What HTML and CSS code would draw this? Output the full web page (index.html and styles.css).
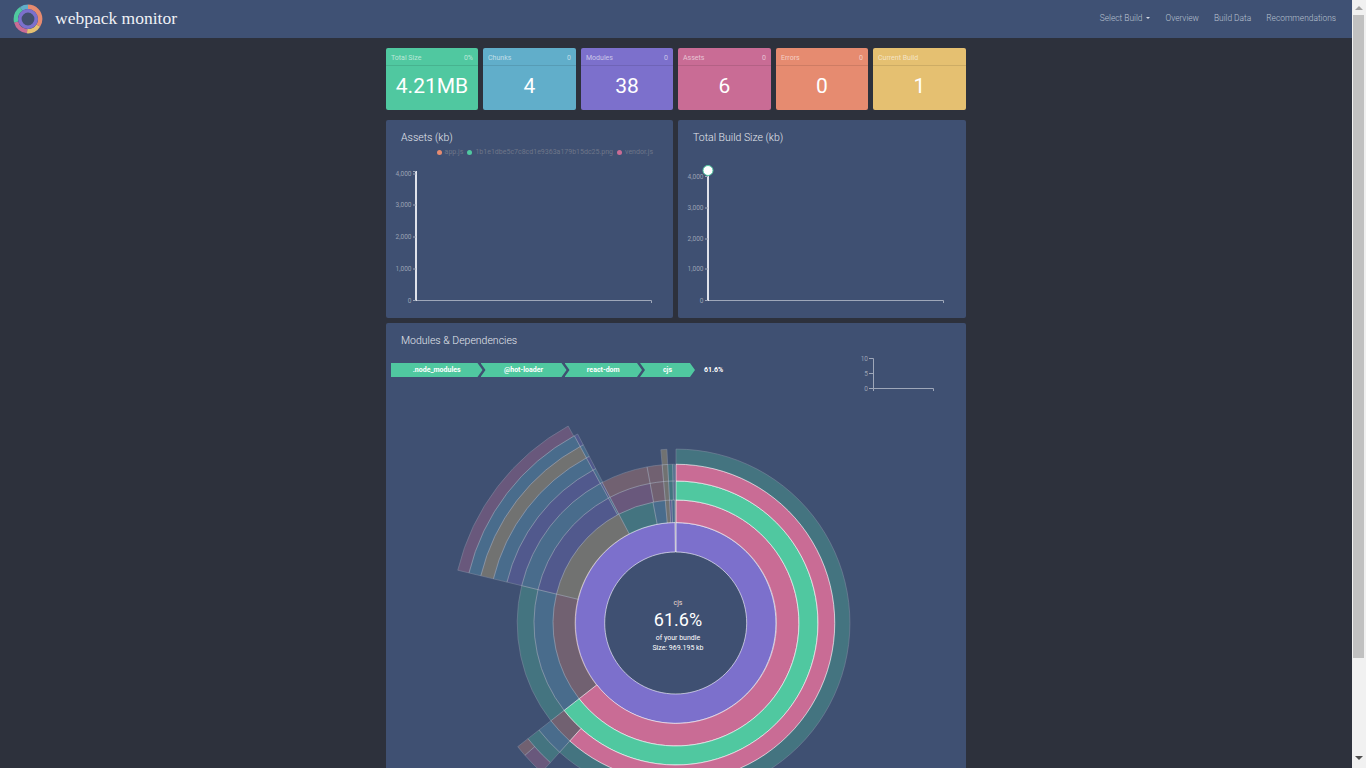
FILE: index.html
```html
<html>
<head>
    <meta charset="utf-8">
    <title>webpack monitor</title>
    <link rel="stylesheet" href="styles.css">
</head>
<body>
    <nav class="navbar">
        <a class="brand">
            <svg class="logo" width="30" height="30" viewBox="0 0 30 30" xmlns="http://www.w3.org/2000/svg">
                <circle class="logo-hole" cx="15" cy="15" r="14"/>
                <g fill="none" stroke-width="4.4" transform="rotate(-90 15 15)">
                    <circle cx="15" cy="15" r="12.2" stroke="#e68b70" stroke-dasharray="26 76.7"/>
                    <circle cx="15" cy="15" r="12.2" stroke="#e5c071" stroke-dasharray="13 76.7" stroke-dashoffset="-26"/>
                    <circle cx="15" cy="15" r="12.2" stroke="#c96c95" stroke-dasharray="15 76.7" stroke-dashoffset="-39"/>
                    <circle cx="15" cy="15" r="12.2" stroke="#50c8a0" stroke-dasharray="15 76.7" stroke-dashoffset="-54"/>
                    <circle cx="15" cy="15" r="12.2" stroke="#61aeca" stroke-dasharray="7.7 76.7" stroke-dashoffset="-69"/>
                </g>
                <circle cx="15" cy="15" r="8.2" fill="none" stroke="#7c70cc" stroke-width="3.6"/>
            </svg>
            <span class="brand-name">webpack monitor</span>
        </a>
        <ul class="nav-links">
            <li>Select Build <i class="caret"></i></li>
            <li>Overview</li>
            <li>Build Data</li>
            <li>Recommendations</li>
        </ul>
    </nav>

    <main class="container">
        <section class="stats">
            <div class="stat stat-green">
                <div class="stat-head"><span>Total Size</span><span>0%</span></div>
                <div class="stat-value">4.21MB</div>
            </div>
            <div class="stat stat-blue">
                <div class="stat-head"><span>Chunks</span><span>0</span></div>
                <div class="stat-value">4</div>
            </div>
            <div class="stat stat-purple">
                <div class="stat-head"><span>Modules</span><span>0</span></div>
                <div class="stat-value">38</div>
            </div>
            <div class="stat stat-pink">
                <div class="stat-head"><span>Assets</span><span>0</span></div>
                <div class="stat-value">6</div>
            </div>
            <div class="stat stat-orange">
                <div class="stat-head"><span>Errors</span><span>0</span></div>
                <div class="stat-value">0</div>
            </div>
            <div class="stat stat-yellow">
                <div class="stat-head"><span>Current Build</span></div>
                <div class="stat-value">1</div>
            </div>
        </section>

        <section class="charts">
            <div class="panel">
                <h3 class="panel-title">Assets (kb)</h3>
                <div class="legend">
                    <span class="legend-item"><i class="dot dot-orange"></i>app.js</span>
                    <span class="legend-item"><i class="dot dot-green"></i>1b1e1dbe5c7c8cd1e9363a179b15dc25.png</span>
                    <span class="legend-item"><i class="dot dot-pink"></i>vendor.js</span>
                </div>
                <svg class="chart" width="287" height="162" viewBox="0 0 287 162" xmlns="http://www.w3.org/2000/svg">
                    <path class="axis-x" d="M30 144.5H265.5V147"/>
                    <path class="axis-y" d="M30 15V145"/>
                    <path class="ticks" d="M27 15.5H30M27 18H30M27 49H30M27 81H30M27 113H30M27 144.5H30"/>
                    <g class="tick-labels">
                        <text x="25.5" y="20">4,000</text>
                        <text x="25.5" y="51">3,000</text>
                        <text x="25.5" y="83">2,000</text>
                        <text x="25.5" y="115">1,000</text>
                        <text x="25.5" y="146.5">0</text>
                    </g>
                </svg>
            </div>
            <div class="panel">
                <h3 class="panel-title">Total Build Size (kb)</h3>
                <div class="legend"></div>
                <svg class="chart" width="288" height="162" viewBox="0 0 288 162" xmlns="http://www.w3.org/2000/svg">
                    <path class="axis-x" d="M30 144.5H265.5V147"/>
                    <path class="axis-y" d="M30 15V145"/>
                    <path class="ticks" d="M27 20.5H30M27 52H30M27 83H30M27 113H30M27 144.5H30"/>
                    <g class="tick-labels">
                        <text x="25.5" y="22.5">4,000</text>
                        <text x="25.5" y="54">3,000</text>
                        <text x="25.5" y="85">2,000</text>
                        <text x="25.5" y="115">1,000</text>
                        <text x="25.5" y="146.5">0</text>
                    </g>
                    <circle class="point" cx="30" cy="14.5" r="5"/>
                </svg>
            </div>
        </section>

        <section class="panel panel-wide">
            <h3 class="panel-title">Modules &amp; Dependencies</h3>
            <div class="trail-row">
                <div class="trail">
                    <span class="crumb crumb-first">.node_modules</span>
                    <span class="crumb crumb-hot">@hot-loader</span>
                    <span class="crumb crumb-react">react-dom</span>
                    <span class="crumb crumb-cjs">cjs</span>
                    <span class="trail-percent">61.6%</span>
                </div>
                <svg class="mini-chart" width="80" height="37" viewBox="0 0 80 37" xmlns="http://www.w3.org/2000/svg">
                    <path class="axis-thin" d="M11 3.5H15.5V33.5H75.5V36M11 18.5H15.5M11 33.5H15.5V36"/>
                    <g class="tick-labels">
                        <text x="10" y="5.5">10</text>
                        <text x="10" y="20.5">5</text>
                        <text x="10" y="35.5">0</text>
                    </g>
                </svg>
            </div>
            <svg id="sunburst" class="sunburst" width="580" height="470" viewBox="-290 -231 580 470" xmlns="http://www.w3.org/2000/svg">
                <g id="arcs"></g>
                <text class="center-name" x="2" y="-18.5">cjs</text>
                <text class="center-percent" x="2" y="2.5">61.6%</text>
                <text class="center-note" x="2" y="16.5">of your bundle</text>
                <text class="center-note" x="2" y="26.5">Size: 969.195 kb</text>
            </svg>
        </section>
    </main>

    <div class="scrollbar">
        <i class="scroll-up"></i>
        <div class="scroll-thumb"></div>
        <i class="scroll-down"></i>
    </div>
    <script src="sunburst.js"></script>
</body>
</html>
```
FILE: styles.css
```css
html, body {
    height: 100%;
    margin: 0;
    overflow: hidden;
    background: #2d313c;
    font-family: Roboto, "Liberation Sans", sans-serif;
}
body {
    padding-right: 14px;
}
.scrollbar {
    position: fixed;
    top: 0;
    right: 0;
    bottom: 0;
    display: flex;
    flex-direction: column;
    align-items: center;
    width: 14px;
    background: #f1f1f1;
}
.scroll-up,
.scroll-down {
    flex: none;
    width: 0;
    height: 0;
    border-left: 4px solid transparent;
    border-right: 4px solid transparent;
}
.scroll-up {
    margin-top: 6px;
    border-bottom: 4px solid #a3a3a3;
}
.scroll-down {
    margin-top: 98px;
    border-top: 4px solid #505050;
}
.scroll-thumb {
    flex: none;
    width: 11px;
    height: 643px;
    margin: 5px 1px 0 0;
    background: #c1c1c1;
}
.navbar {
    display: flex;
    justify-content: space-between;
    align-items: center;
    height: 38px;
    background: #3f5174;
}
.brand {
    display: flex;
    align-items: center;
    gap: 12px;
    padding-left: 13px;
    color: #f0f2f6;
    font-family: "Liberation Serif", serif;
    font-size: 17.5px;
}
.brand-name {
    margin-top: -2px;
}
.logo {
    display: block;
}
.logo-hole {
    fill: #42506e;
}
.nav-links {
    display: flex;
    gap: 15px;
    margin: 0;
    padding: 0 16px 3px 0;
    list-style: none;
    color: #b9c1d0;
    font-size: 8.4px;
    font-weight: 300;
}
.caret {
    display: inline-block;
    margin-left: 2px;
    vertical-align: middle;
    border-top: 2px solid #d5d9e2;
    border-left: 2px solid transparent;
    border-right: 2px solid transparent;
}
.container {
    display: flex;
    flex-direction: column;
    width: 580px;
    margin: 0 auto;
    padding: 10px 0;
}
.stats {
    display: grid;
    grid-template-columns: 92px 93px 92px 93px 92px 93px;
    gap: 5px;
}
.stat {
    height: 62px;
    border-radius: 2px;
    color: #fff;
}
.stat-green { background: #50c8a0; }
.stat-blue { background: #61aeca; }
.stat-purple { background: #7c70cc; }
.stat-pink { background: #c96c95; }
.stat-orange { background: #e68b70; }
.stat-yellow { background: #e5c071; }
.stat-head {
    display: flex;
    justify-content: space-between;
    align-items: center;
    height: 15px;
    padding: 2px 5px 0;
    border-bottom: 1px solid rgba(0, 0, 0, 0.1);
    color: rgba(255, 255, 255, 0.6);
    font-size: 7px;
}
.stat-value {
    padding-top: 8px;
    text-align: center;
    font-size: 21px;
    line-height: 25px;
}
.charts {
    display: grid;
    grid-template-columns: 287px 288px;
    gap: 5px;
    margin-top: 10px;
}
.panel {
    height: 198px;
    border-radius: 2px;
    background: #3f5072;
}
.panel-title {
    height: 27px;
    margin: 0;
    padding: 11px 15px 0;
    box-sizing: border-box;
    color: #e4e7ee;
    font-size: 10.5px;
    font-weight: 300;
    line-height: 13px;
}
.legend {
    display: flex;
    justify-content: flex-end;
    gap: 4px;
    height: 8px;
    padding: 1px 20px 0 0;
    color: #6e7689;
    font-size: 7px;
    line-height: 9px;
}
.legend-item {
    display: flex;
    align-items: center;
    gap: 3px;
}
.dot {
    width: 5px;
    height: 5px;
    border-radius: 50%;
}
.dot-orange { background: #e68b70; }
.dot-green { background: #50c8a0; }
.dot-pink { background: #c96c95; }
.chart {
    display: block;
}
.axis-x {
    fill: none;
    stroke: #9ea7b9;
}
.axis-y {
    fill: none;
    stroke: #dfe2ea;
    stroke-width: 2;
}
.ticks {
    fill: none;
    stroke: #9ea7b9;
}
.tick-labels text {
    fill: #9aa2b2;
    font-size: 6.5px;
    text-anchor: end;
}
.point {
    fill: #fff;
    stroke: #50c8a0;
    stroke-width: 1;
}
.panel-wide {
    height: 544px;
    margin-top: 5px;
}
.trail-row {
    display: flex;
    justify-content: space-between;
    height: 33px;
    padding: 5px 28px 0 5px;
}
.trail {
    display: flex;
    align-items: center;
    height: 14px;
    margin-top: 8px;
}
.crumb {
    display: flex;
    justify-content: center;
    align-items: center;
    height: 14px;
    margin-right: -2px;
    background: #50c8a0;
    color: #fff;
    font-size: 7px;
    font-weight: 700;
}
.crumb-first {
    width: 91.5px;
    clip-path: polygon(0 0, calc(100% - 5px) 0, 100% 50%, calc(100% - 5px) 100%, 0 100%);
}
.crumb-hot,
.crumb-react,
.crumb-cjs {
    clip-path: polygon(0 0, calc(100% - 5px) 0, 100% 50%, calc(100% - 5px) 100%, 0 100%, 5px 50%);
}
.crumb-hot { width: 86px; }
.crumb-react { width: 77.5px; }
.crumb-cjs { width: 55px; }
.trail-percent {
    margin-left: 11px;
    color: #fff;
    font-size: 7px;
    font-weight: 700;
}
.mini-chart {
    display: block;
}
.axis-thin {
    fill: none;
    stroke: #9ea7b9;
}
.sunburst {
    display: block;
    margin-top: 4px;
}
.arc {
    stroke: #fff;
    stroke-opacity: 0.75;
    stroke-width: 0.8;
}
.arc-faded {
    opacity: 0.3;
}
.center-name,
.center-percent,
.center-note {
    text-anchor: middle;
    fill: #fff;
}
.center-name {
    fill: #ead9cf;
    font-size: 7px;
}
.center-percent {
    font-size: 18px;
}
.center-note {
    font-size: 7px;
}
```
FILE: sunburst.js
```js
// Each band is an equal-area ring, so the radius grows with the square root.
const RING = 71;
const colors = {
    green: '#50c8a0',
    blue: '#61aeca',
    purple: '#7c70cc',
    pink: '#c96c95',
    orange: '#e68b70',
    yellow: '#e5c071'
};

// band, start angle, end angle, color, faded (0 = highlighted path)
const segments = [
    [1, 0, 359.5, 'purple', 0],
    [1, 359.5, 360, 'yellow', 1],

    [2, 0, 232, 'pink', 0],
    [2, 232, 283.6, 'orange', 1],
    [2, 283.6, 332.3, 'yellow', 1],
    [2, 332.3, 349.2, 'green', 1],
    [2, 349.2, 355, 'blue', 1],
    [2, 355, 357, 'yellow', 1],
    [2, 357, 358, 'purple', 1],
    [2, 358, 359.5, 'blue', 1],
    [2, 359.5, 360, 'yellow', 1],

    [3, 0, 232, 'green', 0],
    [3, 232, 283.6, 'blue', 1],
    [3, 283.6, 331.6, 'purple', 1],
    [3, 331.6, 332.3, 'blue', 1],
    [3, 332.3, 349.5, 'pink', 1],
    [3, 349.5, 355, 'orange', 1],
    [3, 355, 357, 'yellow', 1],
    [3, 357, 358.8, 'green', 1],
    [3, 358.8, 359.5, 'blue', 1],

    [4, 0, 222, 'pink', 0],
    [4, 222, 232, 'orange', 1],
    [4, 232, 283.6, 'green', 1],
    [4, 283.6, 331.6, 'blue', 1],
    [4, 331.6, 332.3, 'purple', 1],
    [4, 332.3, 349.5, 'orange', 1],
    [4, 349.5, 355, 'orange', 1],
    [4, 355, 357, 'yellow', 1],
    [4, 357, 358.8, 'green', 1],
    [4, 358.8, 359.5, 'blue', 1],

    [5, 0, 222, 'green', 1],
    [5, 222, 232, 'blue', 1],
    [5, 283.6, 331.5, 'purple', 1],
    [5, 331.5, 332.5, 'blue', 1],
    [5, 355, 357, 'yellow', 1],

    [6, 222, 232, 'green', 1],
    [6, 283.6, 331.5, 'blue', 1],
    [6, 331.5, 332.5, 'purple', 1],

    [7, 222, 228.8, 'pink', 1],
    [7, 228.8, 232, 'orange', 1],
    [7, 283.6, 331.5, 'yellow', 1],
    [7, 331.5, 332.5, 'blue', 1],

    [8, 283.6, 331.5, 'blue', 1],
    [8, 331.5, 332.5, 'purple', 1],

    [9, 283.6, 331.3, 'pink', 1]
];

function point(r, deg) {
    const a = deg * Math.PI / 180;
    return (r * Math.sin(a)).toFixed(2) + ' ' + (-r * Math.cos(a)).toFixed(2);
}

function arcPath(band, from, to) {
    const inner = RING * Math.sqrt(band);
    const outer = RING * Math.sqrt(band + 1);
    const large = to - from > 180 ? 1 : 0;
    return 'M' + point(outer, from)
        + 'A' + outer + ' ' + outer + ' 0 ' + large + ' 1 ' + point(outer, to)
        + 'L' + point(inner, to)
        + 'A' + inner + ' ' + inner + ' 0 ' + large + ' 0 ' + point(inner, from) + 'Z';
}

const arcs = document.getElementById('arcs');
segments.forEach(function (s) {
    const path = document.createElementNS('http://www.w3.org/2000/svg', 'path');
    path.setAttribute('d', arcPath(s[0], s[1], s[2]));
    path.setAttribute('fill', colors[s[3]]);
    path.setAttribute('class', s[4] ? 'arc arc-faded' : 'arc');
    arcs.appendChild(path);
});
```
